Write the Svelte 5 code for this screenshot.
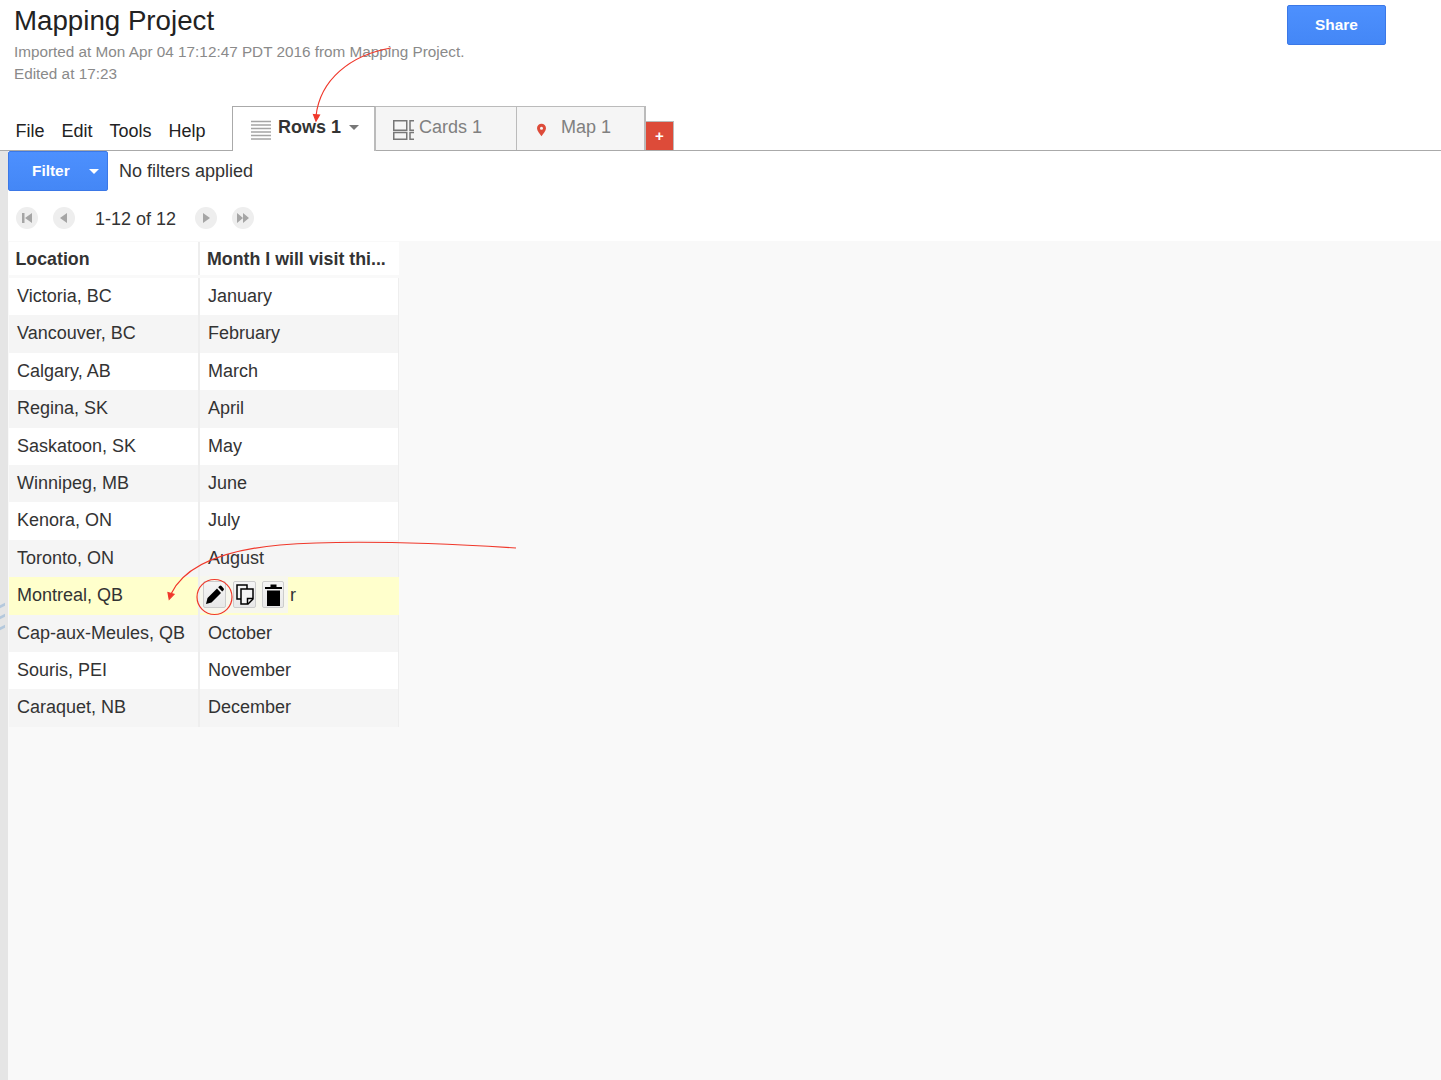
<script>
  const rows = [
    ['Victoria, BC', 'January'],
    ['Vancouver, BC', 'February'],
    ['Calgary, AB', 'March'],
    ['Regina, SK', 'April'],
    ['Saskatoon, SK', 'May'],
    ['Winnipeg, MB', 'June'],
    ['Kenora, ON', 'July'],
    ['Toronto, ON', 'August'],
    ['Montreal, QB', 'r'],
    ['Cap-aux-Meules, QB', 'October'],
    ['Souris, PEI', 'November'],
    ['Caraquet, NB', 'December']
  ];
  const menu = ['File', 'Edit', 'Tools', 'Help'];
</script>

<div class="page">
  <header>
    <div class="top">
      <div class="titles">
        <h1>Mapping Project</h1>
        <p>Imported at Mon Apr 04 17:12:47 PDT 2016 from Mapping Project.</p>
        <p>Edited at 17:23</p>
      </div>
      <button class="share">Share</button>
    </div>
    <div class="tabbar">
      <nav>
        {#each menu as item}<span>{item}</span>{/each}
      </nav>
      <div class="tab active">
        <svg class="ico" width="20" height="20" viewBox="0 0 20 20"><path d="M0 1.500h20M0 5h20M0 8.500h20M0 12h20M0 15.500h20M0 19h20" stroke="#a5a5a5" stroke-width="1.500"/></svg>
        <b>Rows 1</b>
        <i class="caret"></i>
      </div>
      <div class="tab cards">
        <svg class="ico" width="21" height="20" viewBox="0 0 21 20" fill="none" stroke="#777" stroke-width="1.500"><path d="M.75 .75h13v9.500h-13zM.75 12.500h13v6.750h-13zM21 .75h-4v9.500h4M21 12.500h-4v6.750h4"/></svg>
        <span>Cards 1</span>
      </div>
      <div class="tab map">
        <svg class="ico" width="9" height="14" viewBox="0 0 10 14"><path fill-rule="evenodd" d="M5 0a5 5 0 0 1 5 5c0 3-3 5.500-5 9-2-3.500-5-6-5-9a5 5 0 0 1 5-5zm0 3.300a1.700 1.700 0 1 0 0 3.400 1.700 1.700 0 0 0 0-3.400z" fill="#dd4b39"/></svg>
        <span>Map 1</span>
      </div>
      <div class="add">+</div>
    </div>
  </header>

  <div class="body">
    <div class="gutter">
      <span></span><span></span><span></span>
    </div>
    <main>
      <div class="filters">
        <div class="filter"><b>Filter</b><i class="caret white"></i></div>
        <span>No filters applied</span>
      </div>
      <div class="pager">
        <span class="pg"><svg width="12" height="12" viewBox="0 0 12 12"><path d="M1 1h2.500v10H1zM11 1v10L4 6z" fill="#a5a5a5"/></svg></span>
        <span class="pg"><svg width="12" height="12" viewBox="0 0 12 12"><path d="M9 1v10L2 6z" fill="#a5a5a5"/></svg></span>
        <span class="count">1-12 of 12</span>
        <span class="pg"><svg width="12" height="12" viewBox="0 0 12 12"><path d="M3 1v10l7-5z" fill="#a5a5a5"/></svg></span>
        <span class="pg"><svg width="14" height="12" viewBox="0 0 14 12"><path d="M1 1v10l6-5zM7 1v10l6-5z" fill="#a5a5a5"/></svg></span>
      </div>
      <div class="grid-area">
        <div class="table">
          <div class="thead">
            <div class="th">Location</div>
            <div class="th">Month I will visit thi...</div>
          </div>
          {#each rows as row, i}
            <div class="row" class:odd={i % 2 === 1} class:hover={i === 8}>
              <div class="td">{row[0]}</div>
              <div class="td second">
                {#if i === 8}
                  <div class="tools">
                    <span class="tool">
                      <svg width="18" height="19" viewBox="0 0 18 19"><path d="M0 19l1.500-6L11 3.500l4 4.500L5.500 17.500zM12.200 2.300l1.300-1.300a1.500 1.500 0 0 1 2 0l2 2.200a1.500 1.500 0 0 1 0 2l-1.300 1.300z" fill="#000"/></svg>
                    </span>
                    <span class="tool">
                      <svg width="18" height="21" viewBox="0 0 18 21" fill="#f5f5f5" stroke="#000" stroke-width="1.500"><path d="M1 1h10v14H1z"/><path d="M5 5h12v10l-5 5H5z"/><path d="M17 14.500h-5.500V20" fill="none"/></svg>
                    </span>
                    <span class="tool">
                      <svg width="17" height="22" viewBox="0 0 17 22"><path d="M0 3h17v2H0zM5.500 0.500h6V3h-6zM2 6.500h13V22H2z" fill="#000"/></svg>
                    </span>
                  </div>
                {/if}
                <span>{row[1]}</span>
              </div>
            </div>
          {/each}
        </div>
      </div>
    </main>
  </div>

  <svg class="notes" width="1441" height="1080" viewBox="0 0 1441 1080" fill="none" stroke="#f0382b" stroke-width="1.200">
    <path d="M391 48C350 55 320 80 316 116"/>
    <path d="M313.500 114.500l6 .6-3.500 6z" fill="#f0382b"/>
    <path d="M516 548C420 542 340 540 280 545C225 550 185 565 171 594"/>
    <path d="M168 592.500l6 1.800-4.800 5z" fill="#f0382b"/>
    <circle cx="214.500" cy="597" r="17.500"/>
  </svg>
</div>

<style>
  :global(body) {
    background: #fff;
  }
  .page {
    position: relative;
    width: 1441px;
    height: 1080px;
    overflow: hidden;
    font-family: "Liberation Sans", Arial, sans-serif;
    color: #222;
  }
  header {
    height: 150px;
    border-bottom: 1px solid #aaa;
  }
  .top {
    height: 106px;
    display: flex;
    justify-content: space-between;
    align-items: flex-start;
    padding: 0 55px 0 14px;
    box-sizing: border-box;
  }
  h1 {
    margin: 0 0 4px;
    padding-top: 5px;
    font-size: 27.700px;
    line-height: 32px;
    font-weight: 400;
  }
  .titles p {
    margin: 0;
    font-size: 15.300px;
    line-height: 22px;
    color: #8a8a8a;
    white-space: nowrap;
  }
  .share {
    margin-top: 5px;
    width: 99px;
    height: 40px;
    border: 1px solid #3b78e7;
    border-radius: 2px;
    background: linear-gradient(#4d90fe, #4487f6);
    color: #fff;
    font: bold 15.400px "Liberation Sans", Arial, sans-serif;
  }
  .tabbar {
    display: flex;
    height: 45px;
    align-items: flex-start;
  }
  nav {
    width: 232px;
    display: flex;
    gap: 17px;
    padding: 15px 0 0 15.500px;
    box-sizing: border-box;
    font-size: 18px;
    line-height: 20px;
  }
  .tab {
    height: 44px;
    box-sizing: border-box;
    display: flex;
    align-items: center;
    border: 2px solid #bbb;
    border-bottom: 0;
    border-left-width: 0;
    background: #f5f5f5;
    color: #808080;
    font-size: 18px;
    padding-bottom: 3px;
  }
  .ico {
    margin-top: 5px;
  }
  .active {
    width: 144px;
    border-left: 1px solid #aaa;
    border-top: 1px solid #aaa;
    background: #fff;
    padding-left: 18px;
    padding-bottom: 4px;
    color: #333;
    position: relative;
    z-index: 1;
    height: 45px;
  }
  .active b {
    margin-left: 7px;
  }
  .active .caret {
    margin-left: 8px;
  }
  .caret {
    width: 0;
    height: 0;
    border: 5px solid transparent;
    border-top: 5px solid #777;
    border-bottom: 0;
  }
  .caret.white {
    border-top-color: #fff;
  }
  .cards {
    width: 141px;
    padding-left: 17px;
    border-top-width: 1px;
    border-right-width: 1px;
    gap: 5px;
  }
  .map {
    width: 129px;
    padding-left: 20px;
    border-top-width: 1px;
    gap: 15px;
  }
  .add {
    margin-top: 15px;
    width: 28px;
    height: 29px;
    background: #dd4b39;
    border: 1px solid #bbb;
    border-bottom: 0;
    border-left: 0;
    box-sizing: border-box;
    color: #fff;
    font-size: 15px;
    font-weight: bold;
    text-align: center;
    line-height: 27px;
  }
  .body {
    display: flex;
    height: 929px;
  }
  .gutter {
    width: 8px;
    background: #e5e5e5;
    display: flex;
    flex-direction: column;
    gap: 8px;
    padding-top: 453px;
    box-sizing: border-box;
  }
  .gutter span {
    width: 5px;
    height: 3px;
    background: #b4c8dc;
    transform: skewY(-25deg);
  }
  main {
    flex: 1;
    display: flex;
    flex-direction: column;
    min-width: 0;
  }
  .filters {
    height: 40px;
    display: flex;
    align-items: center;
    gap: 11px;
    font-size: 18px;
    color: #333;
  }
  .filter {
    width: 100px;
    height: 40px;
    box-sizing: border-box;
    border: 1px solid #3b78e7;
    border-radius: 2px;
    background: linear-gradient(#4d90fe, #4487f6);
    color: #fff;
    display: flex;
    align-items: center;
    font-size: 15.400px;
    padding-left: 23px;
    gap: 19px;
  }
  .pager {
    height: 50px;
    display: flex;
    align-items: center;
    padding: 4px 0 0 8px;
    font-size: 18px;
    color: #333;
    gap: 15px;
    box-sizing: border-box;
  }
  .pg {
    width: 22px;
    height: 22px;
    border-radius: 50%;
    background: #eee;
    display: flex;
    align-items: center;
    justify-content: center;
  }
  .count {
    margin: 0 5px;
    padding-top: 3px;
    width: 80px;
    white-space: nowrap;
  }
  .grid-area {
    flex: 1;
    background: #f9f9f9;
    padding: 1px 0 0 1px;
  }
  .table {
    width: 390px;
    font-size: 18px;
  }
  .thead, .row {
    display: grid;
    grid-template-columns: 191px 199px;
  }
  .thead {
    height: 36px;
  }
  .th {
    height: 33px;
    background: #fff;
    border-right: 2px solid #eee;
    box-sizing: border-box;
    font-weight: bold;
    font-size: 17.800px;
    color: #333;
    padding: 6px 0 0 6.500px;
    line-height: 22px;
    white-space: nowrap;
  }
  .th:nth-child(2) {
    border-right: 0;
    padding-left: 7px;
  }
  .row {
    height: 37.400px;
    background: #fff;
  }
  .row.odd {
    background: #f5f5f5;
  }
  .row.hover {
    background: #ffffcc;
  }
  .td {
    box-sizing: border-box;
    padding: 0 0 0 8px;
    line-height: 37px;
    color: #333;
    white-space: nowrap;
    border-right: 2px solid #eee;
  }
  .second {
    border-right: 1px solid #eee;
    display: flex;
    gap: 2px;
  }
  .row.hover .second {
    padding-left: 0;
    border-right: 0;
  }
  .tools {
    display: flex;
    gap: 7px;
    height: 37px;
    box-sizing: border-box;
    padding: 5px 2px 5px 3px;
    margin-top: -1px;
    background: #f7f7ee;
  }
  .tool {
    width: 23px;
    height: 27px;
    border-radius: 2px;
    background: linear-gradient(#f5f5f5, #e8e8e8);
    border: 1px solid #ccc;
    box-sizing: border-box;
    display: flex;
    align-items: center;
    justify-content: center;
  }
  .tool:last-child {
    width: 22px;
    margin-left: -1px;
    margin-right: 2px;
  }
  .tool svg {
    flex: none;
  }
  .notes {
    position: absolute;
    left: 0;
    top: 0;
    z-index: 2;
    pointer-events: none;
  }
</style>
